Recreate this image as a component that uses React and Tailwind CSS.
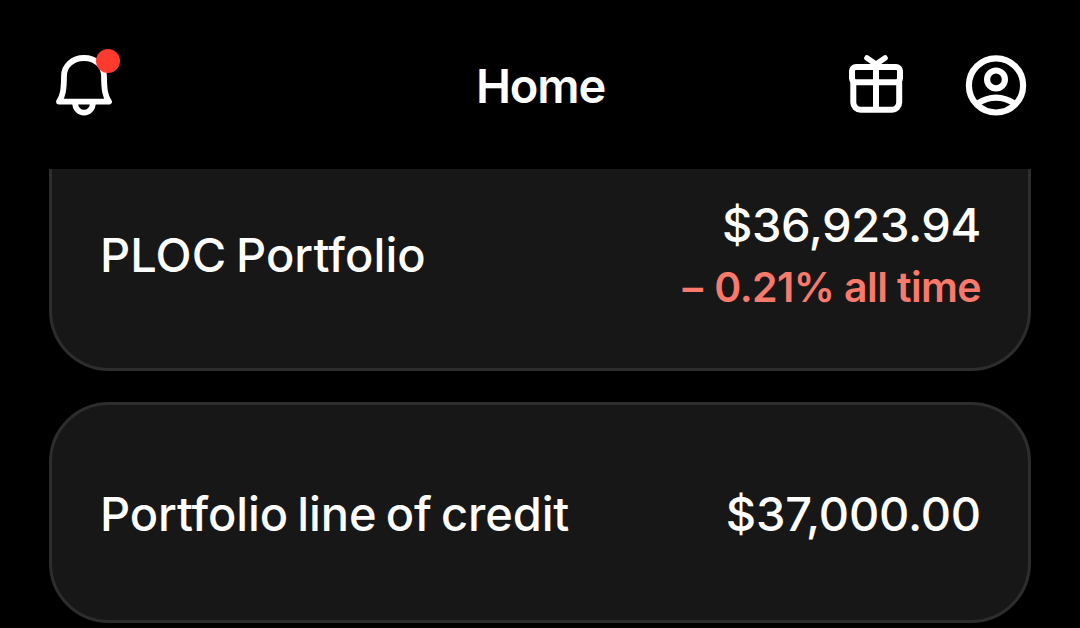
function BellIcon() {
  return (
    <svg className="block h-[76px] w-[76px]" viewBox="50 45 76 76" fill="none">
      <g stroke="#fff" strokeWidth="5.8" strokeLinejoin="round" strokeLinecap="round">
        <path d="M59 101.6C62.8 96 63.9 90 64 76C64 65.6 72.8 58 84 58S104 65.6 104 76C104.1 90 105.2 96 109 101.6Z" />
        <path d="M75.1 103a8.9 9.7 0 0 0 17.8 0" strokeLinecap="butt" />
      </g>
      <circle cx="108" cy="61" r="12" fill="#ff3b30" />
    </svg>
  );
}

function GiftIcon() {
  return (
    <svg
      className="block h-[60px] w-[56px]"
      viewBox="848 54 56 60"
      fill="none"
      stroke="#fff"
      strokeWidth="6"
      strokeLinejoin="round"
    >
      <rect x="852" y="67" width="48" height="15.2" rx="4" />
      <path d="M853.3 82V102.5a7.2 7.2 0 0 0 7.2 7.2H892a7.2 7.2 0 0 0 7.2-7.2V82" />
      <path d="M876 65V109" />
      <path d="M867 58L876 64.3L885 58" strokeWidth="5.6" strokeLinecap="round" />
    </svg>
  );
}

function ProfileIcon() {
  return (
    <svg
      className="block h-[64px] w-[64px]"
      viewBox="964 53 64 64"
      fill="none"
      stroke="#fff"
      strokeWidth="6.2"
    >
      <circle cx="996" cy="85.4" r="27.1" />
      <circle cx="996" cy="79.4" r="8.9" />
      <path d="M977.3 103.6Q996 91.6 1014.7 103.6" />
    </svg>
  );
}

export default function App() {
  return (
    <div className="flex h-[628px] w-[1080px] flex-col overflow-hidden bg-black font-['Inter',sans-serif] text-white">
      <header className="grid h-[169px] shrink-0 grid-cols-[1fr_auto_1fr] items-start pr-[52px] pl-[50px]">
        <div className="pt-[45px]">
          <BellIcon />
        </div>
        <h1 className="pt-[56px] pl-[3px] text-[47px] leading-[60px] font-semibold tracking-[-1.2px]">Home</h1>
        <div className="flex justify-end gap-[60px] pt-[53px]">
          <div className="pt-px">
            <GiftIcon />
          </div>
          <ProfileIcon />
        </div>
      </header>

      <main className="flex flex-col gap-[31px] px-[49px]">
        <section className="flex h-[202px] items-start justify-between rounded-b-[60px] border-3 border-t-0 border-[#2d2d2d] bg-[#171717] pr-[47px] pl-[48px]">
          <p className="pt-[56px] text-[47px] leading-[60px] font-medium tracking-[0.1px] [word-spacing:-3px]">PLOC Portfolio</p>
          <div className="flex flex-col items-end pt-[25px]">
            <p className="text-[47px] leading-[62px] font-medium tracking-[-0.4px]">$36,923.94</p>
            <p className="flex gap-[12px] text-[41px] leading-[62px] font-semibold tracking-[-0.6px] text-[#f9796b]">
              <span>–</span>
              <span>0.21% all time</span>
            </p>
          </div>
        </section>

        <section className="flex h-[221px] items-center justify-between rounded-[60px] border-3 border-[#2d2d2d] bg-[#171717] pt-[3px] pr-[47px] pl-[48px]">
          <p className="text-[47px] leading-[60px] font-medium tracking-[-0.1px] [word-spacing:-3.2px]">Portfolio line of credit</p>
          <p className="text-[47px] leading-[60px] font-medium tracking-[-0.2px]">$37,000.00</p>
        </section>
      </main>
    </div>
  );
}
